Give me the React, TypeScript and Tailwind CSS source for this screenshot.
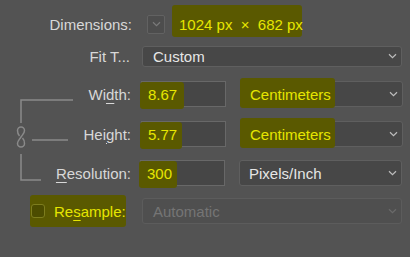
import React from "react";

const HL = "absolute bg-[#5a5900] rounded-[3px]";

function Chevron({ color = "#bdbdbd" }: { color?: string }) {
  return (
    <svg width="9" height="6" viewBox="0 0 9 6" className="shrink-0">
      <path d="M1 1.2 L4.5 4.6 L8 1.2" fill="none" stroke={color} strokeWidth="1.2" />
    </svg>
  );
}

function Select({
  text,
  hl,
  disabled,
}: {
  text: string;
  hl?: boolean;
  disabled?: boolean;
}) {
  return (
    <div className="relative flex items-center justify-between rounded-[3px] border border-[#5f5f5f] bg-[#474747] pl-[9px] pr-[4px] w-[163px] h-[26px]">
      {hl && <span className={`${HL} left-[-1px] top-[-4px] w-[95px] h-[30px]`} />}
      <span
        className={`relative ${
          disabled ? "text-[#767676]" : hl ? "text-[#e6e600]" : "text-[#e6e6e6]"
        }`}
      >
        {text}
      </span>
      <Chevron color={disabled ? "#6a6a6a" : "#bdbdbd"} />
    </div>
  );
}

function Input({ value, hlw }: { value: string; hlw: string }) {
  return (
    <div className="relative flex items-center h-[26px] w-[85px] border border-[#686868] bg-[#464646] pl-[6px]">
      <span className={`${HL} left-[-2px] top-[0px] h-[27px] ${hlw}`} />
      <span className="relative text-[#e6e600]">{value}</span>
    </div>
  );
}

export default function App() {
  return (
    <div
      className="relative w-[410px] h-[257px] overflow-hidden bg-[#535353] text-[15px] text-[#d8d8d8] leading-none"
      style={{ fontFamily: '"Liberation Sans", Arial, sans-serif' }}
    >
      {/* Dimensions */}
      <div className="flex items-center h-[24px] mt-[12px]">
        <div className="w-[132px] text-right">Dimensions:</div>
        <div className="ml-[15px] flex items-center justify-center w-[18px] h-[19px] rounded-[2px] border border-[#626262] bg-[#4d4d4d]">
          <Chevron color="#7a7a7a" />
        </div>
        <div className="relative ml-[7px] flex items-center h-[24px] px-[7px]">
          <span className={`${HL} left-0 top-[-7px] w-[130px] h-[32px]`} />
          <span className="relative text-[#e6e600] whitespace-pre">1024 px  ×  682 px</span>
        </div>
      </div>

      {/* Fit To */}
      <div className="flex items-center h-[20px] mt-[10px]">
        <div className="w-[130px] text-right">Fit T...</div>
        <div className="ml-[12px] flex items-center justify-between h-[21px] w-[260px] rounded-[3px] border border-[#5f5f5f] bg-[#474747] pl-[10px] pr-[4px]">
          <span className="text-[#e6e6e6]">Custom</span>
          <Chevron />
        </div>
      </div>

      {/* Linked group */}
      <div className="relative">
        <svg
          className="absolute left-0 top-0"
          width="80"
          height="110"
          viewBox="0 0 80 110"
        >
          <g stroke="#8a8a8a" strokeWidth="1.5" fill="none">
            <path d="M21 42 V19 H73" />
            <path d="M32 59 H68" />
            <path d="M21 73 V99 H41" />
            <path d="M19.5 55 C17.5 53 17.5 51 17.5 49.5 A3.5 3.5 0 0 1 24.5 49.5 C24.5 52 23 53 21 56 C19 59 17.5 60 17.5 62.5 A3.5 3.5 0 0 0 24.5 62.5 C24.5 61 24.5 59 22.5 57" />
          </g>
        </svg>

        <div className="flex items-center h-[26px] mt-[15px]">
          <div className="w-[131px] text-right">
            Wi<span className="underline underline-offset-[3px]">d</span>th:
          </div>
          <div className="ml-[10px]">
            <Input value="8.67" hlw="w-[44px]" />
          </div>
          <div className="ml-[14px]">
            <Select text="Centimeters" hl />
          </div>
        </div>

        <div className="flex items-center h-[26px] mt-[14px]">
          <div className="w-[131px] text-right">
            Hei<span className="underline underline-offset-[3px]">g</span>ht:
          </div>
          <div className="ml-[10px]">
            <Input value="5.77" hlw="w-[42px]" />
          </div>
          <div className="ml-[14px]">
            <Select text="Centimeters" hl />
          </div>
        </div>

        <div className="flex items-center h-[26px] mt-[13px]">
          <div className="w-[131px] text-right">
            <span className="underline underline-offset-[3px]">R</span>esolution:
          </div>
          <div className="ml-[9px]">
            <Input value="300" hlw="w-[38px]" />
          </div>
          <div className="ml-[14px]">
            <Select text="Pixels/Inch" />
          </div>
        </div>
      </div>

      {/* Resample */}
      <div className="flex items-center h-[26px] mt-[12px]">
        <div className="relative ml-[30px] flex items-center h-[26px] w-[96px]">
          <span className={`${HL} left-0 top-[-3px] w-[96px] h-[32px]`} />
          <span className="relative ml-[1px] w-[14px] h-[14px] rounded-[3px] border border-[#7d7d1e] bg-[#4c4c00]" />
          <span className="relative ml-[9px] text-[#e6e600]">
            Re<span className="underline underline-offset-[3px]">s</span>ample:
          </span>
        </div>
        <div className="ml-[16px] flex items-center justify-between h-[26px] w-[260px] rounded-[3px] border border-[#5c5c5c] bg-[#4f4f4f] pl-[10px] pr-[4px]">
          <span className="text-[#757575]">Automatic</span>
          <Chevron color="#6a6a6a" />
        </div>
      </div>
    </div>
  );
}
